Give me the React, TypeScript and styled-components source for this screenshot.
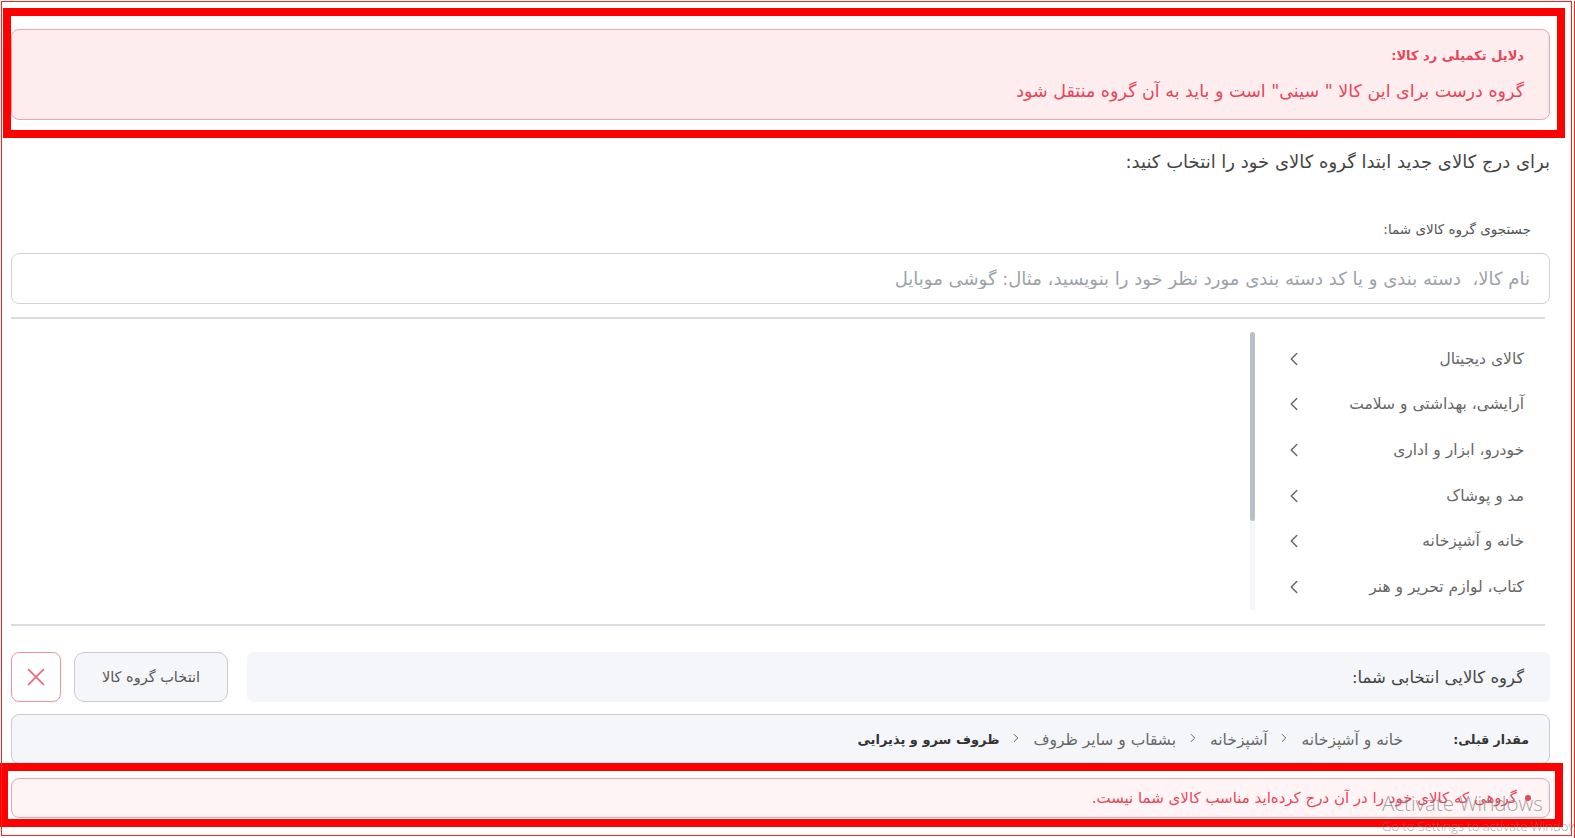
import styled, { createGlobalStyle } from "styled-components";
import { X } from "lucide-react";

const GlobalStyle = createGlobalStyle`
  html, body {
    margin: 0;
    background: #ffffff;
    overflow: hidden;
  }
  body {
    font-family: "DejaVu Sans", "Noto Sans", sans-serif;
  }
`;

const Page = styled.div`
  direction: rtl;
  width: 1575px;
  height: 838px;
  box-sizing: border-box;
  padding: 29px 25px 0 11px;
  position: relative;
`;

const RejectAlert = styled.div`
  background: #fdedef;
  border: 1px solid #f2a3ab;
  border-radius: 8px;
  padding: 14px 25px 16px;
  color: #e5475a;
`;

const AlertTitle = styled.div`
  font-size: 13px;
  line-height: 24px;
  font-weight: 700;
`;

const AlertText = styled.div`
  font-size: 17.5px;
  line-height: 24px;
  margin-top: 11px;
`;

const Intro = styled.p`
  margin: 30px 0 0;
  font-size: 18px;
  line-height: 24px;
  color: #444;
`;

const SearchLabel = styled.label`
  display: block;
  margin: 44px 0 0;
  padding-right: 19px;
  font-size: 13.5px;
  line-height: 22px;
  color: #555;
`;

const SearchInput = styled.input`
  display: block;
  width: 100%;
  box-sizing: border-box;
  height: 51px;
  margin-top: 13px;
  padding: 0 19px;
  border: 1px solid #cfd2d6;
  border-radius: 8px;
  font-family: inherit;
  font-size: 18px;
  color: #333;
  direction: rtl;
  outline: none;
  &::placeholder {
    color: #9ca2aa;
  }
`;

const Divider = styled.hr<{ $top: number }>`
  border: none;
  height: 2px;
  background: #d8dce0;
  margin: ${p => p.$top}px 5px 0 0;
`;

const Browser = styled.div`
  display: flex;
  margin-top: 13px;
  height: 278px;
`;

const Column = styled.div`
  display: flex;
  width: 300px;
`;

const ItemList = styled.ul`
  flex: 1;
  list-style: none;
  margin: 0;
  padding: 4px 0 0;
`;

const Item = styled.li`
  display: flex;
  align-items: center;
  justify-content: space-between;
  height: 45.6px;
  padding: 0 26px 0 28px;
  font-size: 15.5px;
  color: #666;
  cursor: pointer;
`;

const Track = styled.div`
  width: 5px;
  background: #f3f5f8;
  border-radius: 3px;
`;

const Thumb = styled.div`
  height: 189px;
  background: #b8bfc6;
  border-radius: 3px;
`;

const SelectRow = styled.div`
  display: flex;
  align-items: stretch;
  height: 50px;
  margin-top: 26px;
  gap: 13px;
`;

const SelectedBox = styled.div`
  flex: 1;
  display: flex;
  align-items: center;
  margin-left: 6px;
  padding-right: 26px;
  background: #f5f6fa;
  border-radius: 6px;
  font-size: 16.5px;
  color: #444;
`;

const PickButton = styled.button`
  width: 154px;
  background: #f5f6f9;
  border: 1px solid #c9cbce;
  border-radius: 10px;
  font-family: inherit;
  font-size: 14.5px;
  color: #555;
  direction: rtl;
  cursor: pointer;
`;

const ClearButton = styled.button`
  width: 50px;
  display: flex;
  align-items: center;
  justify-content: center;
  background: #ffffff;
  border: 1px solid #f0929c;
  border-radius: 8px;
  color: #f0606f;
  padding: 0;
  cursor: pointer;
`;

const PrevBox = styled.div`
  display: flex;
  align-items: center;
  height: 50px;
  box-sizing: border-box;
  margin-top: 12px;
  padding-right: 20px;
  background: #f5f6fa;
  border: 1px solid #c9cbce;
  border-radius: 8px;
  color: #666;
`;

const PrevLabel = styled.span`
  font-size: 12.5px;
  font-weight: 700;
  color: #333;
  margin-left: 50px;
`;

const Crumb = styled.span<{ $strong?: boolean }>`
  font-size: ${p => (p.$strong ? "13px" : "15.5px")};
  font-weight: ${p => (p.$strong ? 700 : 400)};
  color: ${p => (p.$strong ? "#333" : "#666")};
`;

const CrumbSep = styled.span`
  display: inline-flex;
  margin: 0 10px;
  color: #555;
`;

const WarnAlert = styled.div`
  display: flex;
  align-items: center;
  height: 40px;
  box-sizing: border-box;
  margin-top: 14px;
  padding-right: 18px;
  background: #fff4f5;
  border: 1px solid #f2a3ab;
  border-radius: 8px;
  font-size: 15px;
  color: #e5475a;
`;

const Bullet = styled.span`
  width: 6px;
  height: 6px;
  border-radius: 50%;
  background: #e5475a;
  margin-left: 8px;
`;

/* annotation marks drawn over the screenshot */
const Mark = styled.div<{ $l: number; $t: number; $w: number; $h: number }>`
  position: absolute;
  left: ${p => p.$l}px;
  top: ${p => p.$t}px;
  width: ${p => p.$w}px;
  height: ${p => p.$h}px;
  box-sizing: border-box;
  border: 8px solid #ff0000;
  pointer-events: none;
`;

const Frame = styled.div`
  position: absolute;
  left: 1px;
  top: 1px;
  width: 1571px;
  height: 835px;
  box-sizing: border-box;
  border: 1px solid #ff2020;
  pointer-events: none;
  &::after {
    content: "";
    position: absolute;
    left: 1572px;
    top: -1px;
    width: 1px;
    height: 838px;
    background: #ff2020;
  }
`;

const Watermark = styled.div`
  position: absolute;
  left: 1382px;
  top: 790px;
  direction: ltr;
  white-space: nowrap;
  font-family: "Open Sans", "Noto Sans", sans-serif;
  color: rgba(120, 120, 120, 0.7);
  pointer-events: none;
`;

const WatermarkTitle = styled.div`
  font-size: 20.5px;
  line-height: 26px;
  font-weight: 300;
`;

const WatermarkSub = styled.div`
  font-size: 13px;
  line-height: 20px;
  font-weight: 300;
`;

const Chevron = ({ dir, size }: { dir: "left" | "right"; size: number }) => (
  <svg width={size} height={size} viewBox="0 0 24 24" fill="none" stroke="currentColor"
    strokeWidth={1.6} strokeLinecap="round" strokeLinejoin="round">
    <path d={dir === "left" ? "M15 18l-6-6 6-6" : "M9 18l6-6-6-6"} />
  </svg>
);

const categories = [
  "کالای دیجیتال",
  "آرایشی، بهداشتی و سلامت",
  "خودرو، ابزار و اداری",
  "مد و پوشاک",
  "خانه و آشپزخانه",
  "کتاب، لوازم تحریر و هنر",
];

const crumbs = ["خانه و آشپزخانه", "آشپزخانه", "بشقاب و سایر ظروف"];

const App = () => (
  <Page>
    <GlobalStyle />
    <RejectAlert>
      <AlertTitle>دلایل تکمیلی رد کالا:</AlertTitle>
      <AlertText>گروه درست برای این کالا " سینی" است و باید به آن گروه منتقل شود</AlertText>
    </RejectAlert>

    <Intro>برای درج کالای جدید ابتدا گروه کالای خود را انتخاب کنید:</Intro>

    <SearchLabel>جستجوی گروه کالای شما:</SearchLabel>
    <SearchInput placeholder="نام کالا،  دسته بندی و یا کد دسته بندی مورد نظر خود را بنویسید، مثال: گوشی موبایل" />

    <Divider $top={13} />

    <Browser>
      <Column>
        <ItemList>
          {categories.map(c => (
            <Item key={c}>
              <span>{c}</span>
              <Chevron dir="left" size={22} />
            </Item>
          ))}
        </ItemList>
        <Track>
          <Thumb />
        </Track>
      </Column>
    </Browser>

    <Divider $top={14} />

    <SelectRow>
      <SelectedBox>گروه کالایی انتخابی شما:</SelectedBox>
      <PickButton>انتخاب گروه کالا</PickButton>
      <ClearButton>
        <X size={30} strokeWidth={1.4} />
      </ClearButton>
    </SelectRow>

    <PrevBox>
      <PrevLabel>مقدار قبلی:</PrevLabel>
      {crumbs.map(c => (
        <span key={c}>
          <Crumb>{c}</Crumb>
          <CrumbSep>
            <Chevron dir="right" size={14} />
          </CrumbSep>
        </span>
      ))}
      <Crumb $strong>ظروف سرو و پذیرایی</Crumb>
    </PrevBox>

    <WarnAlert>
      <Bullet />
      گروهی که کالای خود را در آن درج کرده‌اید مناسب کالای شما نیست.
    </WarnAlert>

    <Mark $l={3} $t={8} $w={1562} $h={130} />
    <Mark $l={0} $t={763} $w={1563} $h={64} />
    <Frame />
    <Watermark>
      <WatermarkTitle>Activate Windows</WatermarkTitle>
      <WatermarkSub>Go to Settings to activate Windows.</WatermarkSub>
    </Watermark>
  </Page>
);

export default App;
